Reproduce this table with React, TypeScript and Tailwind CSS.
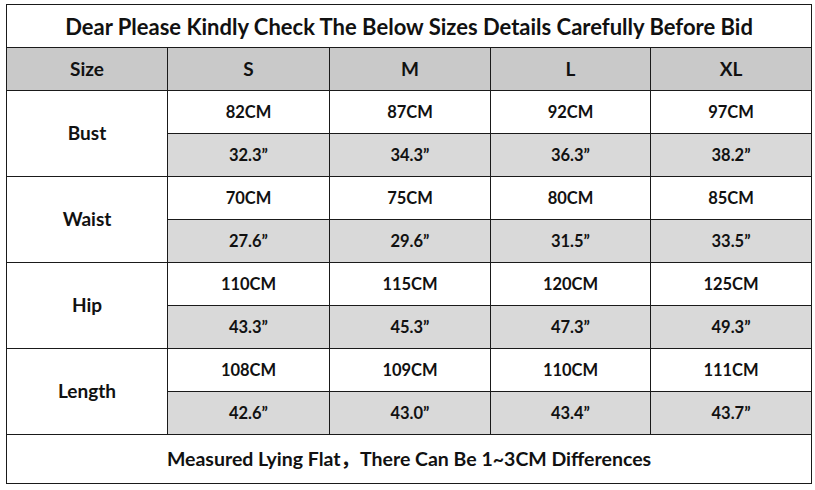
import { Fragment } from 'react';

const sizes = ['S', 'M', 'L', 'XL'];

const rows = [
  { name: 'Bust', cm: ['82CM', '87CM', '92CM', '97CM'], inch: ['32.3”', '34.3”', '36.3”', '38.2”'] },
  { name: 'Waist', cm: ['70CM', '75CM', '80CM', '85CM'], inch: ['27.6”', '29.6”', '31.5”', '33.5”'] },
  { name: 'Hip', cm: ['110CM', '115CM', '120CM', '125CM'], inch: ['43.3”', '45.3”', '47.3”', '49.3”'] },
  { name: 'Length', cm: ['108CM', '109CM', '110CM', '111CM'], inch: ['42.6”', '43.0”', '43.4”', '43.7”'] },
];

const cell = 'border border-[#1a1a1a] text-center align-middle p-0';

export default function App() {
  return (
    <div
      className="w-[815px] h-[490px] bg-white pl-[6px] pt-[4px] text-[#111] font-bold"
      style={{ fontFamily: 'Lato, "Noto Sans CJK SC", sans-serif' }}
    >
      <table className="w-[805px] table-fixed border-collapse">
        <colgroup>
          <col className="w-[161px]" />
          <col className="w-[162px]" />
          <col className="w-[161px]" />
          <col className="w-[160px]" />
          <col className="w-[161px]" />
        </colgroup>
        <tbody>
          <tr className="h-[43px]">
            <td colSpan={5} className={`${cell} text-[22px]`}>
              Dear Please Kindly Check The Below Sizes Details Carefully Before Bid
            </td>
          </tr>
          <tr className="h-[43px] bg-[#c9c9c9] text-[19px]">
            <td className={cell}>Size</td>
            {sizes.map((s) => (
              <td key={s} className={cell}>
                {s}
              </td>
            ))}
          </tr>
          {rows.map((r) => (
            <Fragment key={r.name}>
              <tr className="h-[43px] text-[16.5px]">
                <td rowSpan={2} className={`${cell} text-[19px] bg-white`}>
                  {r.name}
                </td>
                {r.cm.map((v, i) => (
                  <td key={i} className={cell}>
                    {v}
                  </td>
                ))}
              </tr>
              <tr className="h-[43px] text-[16.5px] bg-[#d9d9d9]">
                {r.inch.map((v, i) => (
                  <td key={i} className={cell}>
                    {v}
                  </td>
                ))}
              </tr>
            </Fragment>
          ))}
          <tr className="h-[49px]">
            <td colSpan={5} className={`${cell} text-[19.5px]`}>
              Measured Lying Flat，There Can Be 1~3CM Differences
            </td>
          </tr>
        </tbody>
      </table>
    </div>
  );
}
